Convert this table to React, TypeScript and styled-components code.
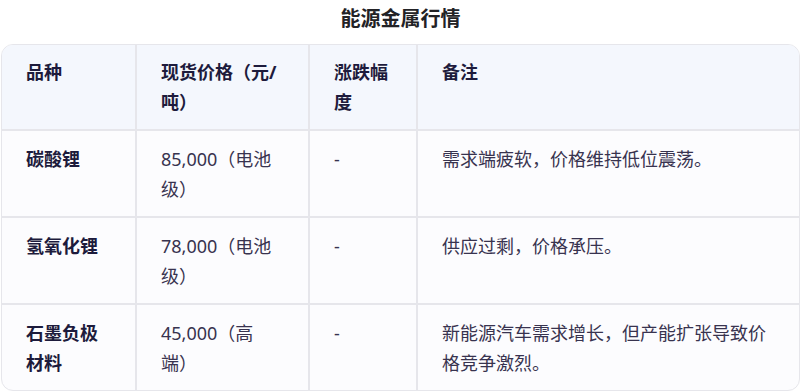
import React from "react";
import styled, { createGlobalStyle } from "styled-components";

const GlobalStyle = createGlobalStyle`
  html, body {
    margin: 0;
    padding: 0;
    background: #ffffff;
  }
  body {
    font-family: "Noto Sans", "Noto Sans CJK SC", sans-serif;
  }
`;

const Page = styled.div`
  width: 800px;
  height: 392px;
  overflow: hidden;
  padding: 5px 0 0 1px;
  box-sizing: border-box;
`;

const Title = styled.h2`
  margin: 0 0 11px;
  font-size: 20px;
  line-height: 28px;
  font-weight: 700;
  color: #222226;
  text-align: center;
`;

const TableFrame = styled.div`
  border: 1px solid #e6e6eb;
  border-radius: 12px;
  overflow: hidden;
  background: #fcfcfe;
`;

const Table = styled.table`
  width: 100%;
  border-collapse: separate;
  border-spacing: 0;
  table-layout: fixed;
  font-size: 18px;
  line-height: 30px;
  text-spacing-trim: space-all;
`;

const Col = styled.col<{ $w: number }>`
  width: ${(p) => p.$w}px;
`;

const HeadCell = styled.th`
  background: #f4f7fd;
  text-align: left;
  vertical-align: top;
  font-weight: 700;
  color: #1d1b3c;
  padding: 12px 25px 12px 24px;
  border-right: 2px solid #e6e6eb;
  border-bottom: 2px solid #e6e6eb;
  &:last-child {
    border-right: none;
  }
`;

const Row = styled.tr`
  &:last-child td {
    border-bottom: none;
  }
`;

const Cell = styled.td<{ $strong?: boolean }>`
  vertical-align: top;
  padding: 13px 25px 12px 24px;
  color: ${(p) => (p.$strong ? "#1d1b3c" : "#38334f")};
  font-weight: ${(p) => (p.$strong ? 700 : 400)};
  border-right: 2px solid #e6e6eb;
  border-bottom: 2px solid #e6e6eb;
  &:last-child {
    border-right: none;
  }
`;

const rows = [
  {
    name: "碳酸锂",
    price: "85,000（电池级）",
    change: "-",
    note: "需求端疲软，价格维持低位震荡。",
  },
  {
    name: "氢氧化锂",
    price: "78,000（电池级）",
    change: "-",
    note: "供应过剩，价格承压。",
  },
  {
    name: "石墨负极材料",
    price: "45,000（高端）",
    change: "-",
    note: "新能源汽车需求增长，但产能扩张导致价格竞争激烈。",
  },
];

export default function App() {
  return (
    <>
      <GlobalStyle />
      <Page>
        <Title>能源金属行情</Title>
        <TableFrame>
          <Table>
            <colgroup>
              <Col $w={135} />
              <Col $w={173} />
              <Col $w={108} />
              <Col $w={381} />
            </colgroup>
            <thead>
              <tr>
                <HeadCell>品种</HeadCell>
                <HeadCell>现货价格（元/吨）</HeadCell>
                <HeadCell>涨跌幅度</HeadCell>
                <HeadCell>备注</HeadCell>
              </tr>
            </thead>
            <tbody>
              {rows.map((r) => (
                <Row key={r.name}>
                  <Cell $strong>{r.name}</Cell>
                  <Cell>{r.price}</Cell>
                  <Cell>{r.change}</Cell>
                  <Cell>{r.note}</Cell>
                </Row>
              ))}
            </tbody>
          </Table>
        </TableFrame>
      </Page>
    </>
  );
}
